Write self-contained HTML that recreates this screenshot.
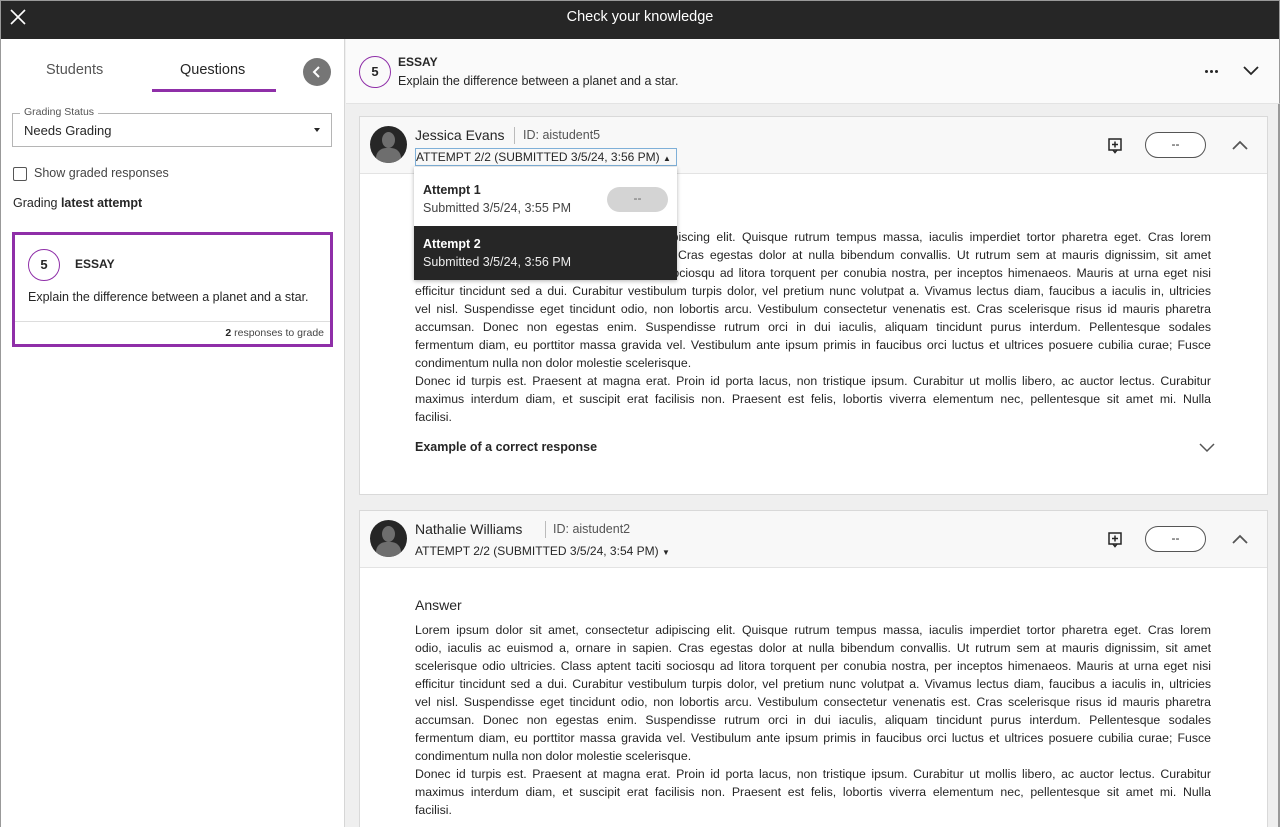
<!DOCTYPE html>
<html><head><meta charset="utf-8"><style>
*{box-sizing:border-box;margin:0;padding:0}
html{width:1280px;height:827px;overflow:hidden}
body{width:1280px;height:827px;overflow:hidden;font-family:"Liberation Sans",sans-serif;color:#262626;background:#efefef;position:relative}
.top{position:absolute;left:0;top:0;width:1280px;height:39px;background:#262626;color:#fff;text-align:center;font-size:14.5px;line-height:33px;border:1px solid #999;border-bottom:none}
.left{position:absolute;left:0;top:39px;width:345px;height:788px;background:#fff;border-right:1px solid #d6d6d6;border-left:1px solid #999}
.abs{position:absolute}
.circ{position:absolute;border:1.5px solid #8f2fa8;border-radius:50%;text-align:center;font-weight:bold}
.lines div{text-align:justify;text-align-last:justify;height:18px;line-height:18px;overflow:hidden}
.lines div.l{text-align-last:left}
.lines{position:absolute;left:415px;width:796px;font-size:12.3px;color:#262626}
.card{position:absolute;left:359px;width:909px;background:#fff;border:1px solid #d9d9d9}
.chead{position:absolute;left:0;top:0;right:0;height:57px;background:#f8f8f8;border-bottom:1px solid #e3e3e3}
.av{position:absolute;left:10px;top:9px;width:37px;height:37px;border-radius:50%;background:#262626;overflow:hidden}
.pill{position:absolute;width:61px;height:26px;border:1px solid #555;border-radius:13px;text-align:center;line-height:23px;font-size:12px;background:#fff}
.dot{position:absolute;width:3px;height:3px;border-radius:50%;background:#262626}
</style></head><body>
<div class="top">Check your knowledge</div>
<svg class="abs" style="left:10px;top:9px" width="16" height="16"><path d="M1 1L15 15M15 1L1 15" stroke="#fff" stroke-width="1.6"/></svg>

<div class="left">
  <div class="abs" style="left:45px;top:23px;font-size:14.5px;color:#555">Students</div>
  <div class="abs" style="left:179px;top:23px;font-size:14.5px;color:#262626">Questions</div>
  <div class="abs" style="left:151px;top:50px;width:124px;height:3px;background:#8f2fa8"></div>
  <div class="abs" style="left:302px;top:19px;width:28px;height:28px;border-radius:50%;background:#767676"></div>
  <svg class="abs" style="left:310px;top:26px" width="12" height="14"><path d="M8 2L3 7L8 12" stroke="#fff" stroke-width="2" fill="none"/></svg>
  <div class="abs" style="left:11px;top:74px;width:320px;height:34px;border:1px solid #b5b5b5"></div>
  <div class="abs" style="left:19px;top:67px;padding:0 4px;background:#fff;font-size:10.5px;color:#555">Grading Status</div>
  <div class="abs" style="left:23px;top:84px;font-size:13px">Needs Grading</div>
  <div class="abs" style="left:313px;top:89px;border-left:3.5px solid transparent;border-right:3.5px solid transparent;border-top:4px solid #262626"></div>
  <div class="abs" style="left:12px;top:128px;width:14px;height:14px;border:1.3px solid #555;border-radius:2px"></div>
  <div class="abs" style="left:33px;top:127px;font-size:12.5px;color:#444">Show graded responses</div>
  <div class="abs" style="left:12px;top:157px;font-size:12.5px">Grading <b>latest attempt</b></div>
  <div class="abs" style="left:11px;top:193px;width:321px;height:115px;border:3px solid #8f2fa8"></div>
  <div class="circ" style="left:27px;top:210px;width:32px;height:32px;line-height:29px;font-size:13px">5</div>
  <div class="abs" style="left:74px;top:218px;font-size:12px;font-weight:bold">ESSAY</div>
  <div class="abs" style="left:27px;top:251px;font-size:12.5px">Explain the difference between a planet and a star.</div>
  <div class="abs" style="left:14px;top:282px;width:315px;height:1px;background:#ddd"></div>
  <div class="abs" style="left:160px;top:288px;width:163px;text-align:right;font-size:10.5px;color:#444"><b style="color:#262626">2</b> responses to grade</div>
</div>

<div class="abs" style="left:346px;top:39px;width:934px;height:65px;background:#fafafa;border-bottom:1px solid #e3e3e3;border-right:1px solid #999"></div>
<div class="circ" style="left:359px;top:56px;width:32px;height:32px;line-height:29px;font-size:13px">5</div>
<div class="abs" style="left:398px;top:55px;font-size:12px;font-weight:bold">ESSAY</div>
<div class="abs" style="left:398px;top:74px;font-size:12.5px">Explain the difference between a planet and a star.</div>
<div class="dot" style="left:1205px;top:70px"></div><div class="dot" style="left:1210px;top:70px"></div><div class="dot" style="left:1215px;top:70px"></div>
<svg class="abs" style="left:1243px;top:65px" width="16" height="12"><path d="M1 2L8 9L15 2" stroke="#262626" stroke-width="1.8" fill="none"/></svg>
<div class="abs" style="left:1278px;top:104px;width:2px;height:723px;background:#999"></div>

<!-- Card 1 -->
<div class="card" style="top:116px;height:379px">
  <div class="chead">
    <div class="av"><div class="abs" style="left:12px;top:6px;width:13px;height:16px;border-radius:50%;background:#6e6e6e"></div><div class="abs" style="left:6px;top:22px;width:25px;height:20px;border-radius:10px 10px 0 0;background:#6e6e6e"></div></div>
    <div class="abs" style="left:55px;top:10px;font-size:14px">Jessica Evans</div>
    <div class="abs" style="left:154px;top:10px;width:1px;height:17px;background:#bbb"></div>
    <div class="abs" style="left:163px;top:11px;font-size:12.5px;color:#555">ID: aistudent5</div>
    <div class="abs" style="left:55px;top:31px;width:262px;height:18px;border:1px solid #7fb0d8;font-size:12px;line-height:16px;white-space:nowrap">ATTEMPT 2/2 (SUBMITTED 3/5/24, 3:56 PM) <span style="font-size:8px">▲</span></div>
    <svg class="abs" style="left:748px;top:21px" width="14" height="16"><rect x="1" y="1" width="12" height="11" fill="none" stroke="#262626" stroke-width="1.5"/><path d="M7 3.5V9.5M4 6.5H10M5 12L7 14.5L9 12" stroke="#262626" stroke-width="1.5" fill="none"/></svg>
    <div class="pill" style="left:785px;top:15px">--</div>
    <svg class="abs" style="left:872px;top:23px" width="16" height="11"><path d="M1 9L8 2L15 9" stroke="#555" stroke-width="1.8" fill="none"/></svg>
  </div>
  <div class="abs" style="left:55px;top:323px;font-size:12.5px;font-weight:bold">Example of a correct response</div>
  <svg class="abs" style="left:839px;top:325px" width="16" height="11"><path d="M1 2L8 9L15 2" stroke="#555" stroke-width="1.5" fill="none"/></svg>
</div>
<div class="lines" style="top:228px">
<div>Lorem ipsum dolor sit amet, consectetur adipiscing elit. Quisque rutrum tempus massa, iaculis imperdiet tortor pharetra eget. Cras lorem</div>
<div>odio, iaculis ac euismod a, ornare in sapien. Cras egestas dolor at nulla bibendum convallis. Ut rutrum sem at mauris dignissim, sit amet</div>
<div>scelerisque odio ultricies. Class aptent taciti sociosqu ad litora torquent per conubia nostra, per inceptos himenaeos. Mauris at urna eget nisi</div>
<div>efficitur tincidunt sed a dui. Curabitur vestibulum turpis dolor, vel pretium nunc volutpat a. Vivamus lectus diam, faucibus a iaculis in, ultricies</div>
<div>vel nisl. Suspendisse eget tincidunt odio, non lobortis arcu. Vestibulum consectetur venenatis est. Cras scelerisque risus id mauris pharetra</div>
<div>accumsan. Donec non egestas enim. Suspendisse rutrum orci in dui iaculis, aliquam tincidunt purus interdum. Pellentesque sodales</div>
<div>fermentum diam, eu porttitor massa gravida vel. Vestibulum ante ipsum primis in faucibus orci luctus et ultrices posuere cubilia curae; Fusce</div>
<div class="l">condimentum nulla non dolor molestie scelerisque.</div>
<div>Donec id turpis est. Praesent at magna erat. Proin id porta lacus, non tristique ipsum. Curabitur ut mollis libero, ac auctor lectus. Curabitur</div>
<div>maximus interdum diam, et suscipit erat facilisis non. Praesent est felis, lobortis viverra elementum nec, pellentesque sit amet mi. Nulla</div>
<div class="l">facilisi.</div>
</div>

<!-- dropdown -->
<div class="abs" style="left:414px;top:167px;width:263px;height:113px;background:#fff;box-shadow:0 1px 4px rgba(0,0,0,.3)">
  <div class="abs" style="left:9px;top:16px;font-size:12.5px;font-weight:bold">Attempt 1</div>
  <div class="abs" style="left:9px;top:34px;font-size:12.5px;color:#444">Submitted 3/5/24, 3:55 PM</div>
  <div class="abs" style="left:193px;top:20px;width:61px;height:25px;border-radius:13px;background:#d4d4d4;text-align:center;line-height:23px;font-size:12px;color:#666">--</div>
  <div class="abs" style="left:0;top:59px;width:263px;height:54px;background:#262626"></div>
  <div class="abs" style="left:9px;top:70px;font-size:12.5px;font-weight:bold;color:#fff">Attempt 2</div>
  <div class="abs" style="left:9px;top:88px;font-size:12.5px;color:#eee">Submitted 3/5/24, 3:56 PM</div>
</div>

<!-- Card 2 -->
<div class="card" style="top:510px;height:317px;border-bottom:none">
  <div class="chead">
    <div class="av"><div class="abs" style="left:12px;top:6px;width:13px;height:16px;border-radius:50%;background:#6e6e6e"></div><div class="abs" style="left:6px;top:22px;width:25px;height:20px;border-radius:10px 10px 0 0;background:#6e6e6e"></div></div>
    <div class="abs" style="left:55px;top:10px;font-size:14px">Nathalie Williams</div>
    <div class="abs" style="left:185px;top:10px;width:1px;height:17px;background:#bbb"></div>
    <div class="abs" style="left:193px;top:11px;font-size:12.5px;color:#555">ID: aistudent2</div>
    <div class="abs" style="left:55px;top:32px;font-size:12px;line-height:16px;white-space:nowrap">ATTEMPT 2/2 (SUBMITTED 3/5/24, 3:54 PM) <span style="font-size:8px">▼</span></div>
    <svg class="abs" style="left:748px;top:21px" width="14" height="16"><rect x="1" y="1" width="12" height="11" fill="none" stroke="#262626" stroke-width="1.5"/><path d="M7 3.5V9.5M4 6.5H10M5 12L7 14.5L9 12" stroke="#262626" stroke-width="1.5" fill="none"/></svg>
    <div class="pill" style="left:785px;top:15px">--</div>
    <svg class="abs" style="left:872px;top:23px" width="16" height="11"><path d="M1 9L8 2L15 9" stroke="#555" stroke-width="1.8" fill="none"/></svg>
  </div>
  <div class="abs" style="left:55px;top:86px;font-size:14px">Answer</div>
</div>
<div class="lines" style="top:621px">
<div>Lorem ipsum dolor sit amet, consectetur adipiscing elit. Quisque rutrum tempus massa, iaculis imperdiet tortor pharetra eget. Cras lorem</div>
<div>odio, iaculis ac euismod a, ornare in sapien. Cras egestas dolor at nulla bibendum convallis. Ut rutrum sem at mauris dignissim, sit amet</div>
<div>scelerisque odio ultricies. Class aptent taciti sociosqu ad litora torquent per conubia nostra, per inceptos himenaeos. Mauris at urna eget nisi</div>
<div>efficitur tincidunt sed a dui. Curabitur vestibulum turpis dolor, vel pretium nunc volutpat a. Vivamus lectus diam, faucibus a iaculis in, ultricies</div>
<div>vel nisl. Suspendisse eget tincidunt odio, non lobortis arcu. Vestibulum consectetur venenatis est. Cras scelerisque risus id mauris pharetra</div>
<div>accumsan. Donec non egestas enim. Suspendisse rutrum orci in dui iaculis, aliquam tincidunt purus interdum. Pellentesque sodales</div>
<div>fermentum diam, eu porttitor massa gravida vel. Vestibulum ante ipsum primis in faucibus orci luctus et ultrices posuere cubilia curae; Fusce</div>
<div class="l">condimentum nulla non dolor molestie scelerisque.</div>
<div>Donec id turpis est. Praesent at magna erat. Proin id porta lacus, non tristique ipsum. Curabitur ut mollis libero, ac auctor lectus. Curabitur</div>
<div>maximus interdum diam, et suscipit erat facilisis non. Praesent est felis, lobortis viverra elementum nec, pellentesque sit amet mi. Nulla</div>
<div class="l">facilisi.</div>
</div>
</body></html>
